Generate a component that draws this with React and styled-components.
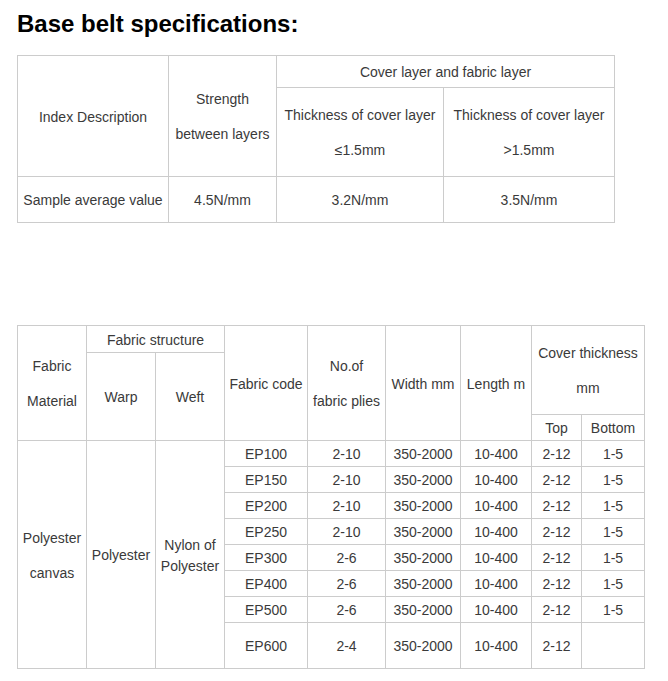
import React from "react"
import styled, { createGlobalStyle } from "styled-components"

const GlobalStyle = createGlobalStyle`
  body {
    margin: 0;
    background: #fff;
    font-family: "Liberation Sans", Arial, sans-serif;
  }
`

const rows = [
  ["EP100", "2-10", "1-5"],
  ["EP150", "2-10", "1-5"],
  ["EP200", "2-10", "1-5"],
  ["EP250", "2-10", "1-5"],
  ["EP300", "2-6", "1-5"],
  ["EP400", "2-6", "1-5"],
  ["EP500", "2-6", "1-5"],
  ["EP600", "2-4", ""],
]

function App() {
  return (
    <Page>
      <GlobalStyle />
      <Heading>Base belt specifications:</Heading>

      <SpecTable $width={598}>
        <colgroup>
          <col style={{ width: 151 }} />
          <col style={{ width: 108 }} />
          <col style={{ width: 167 }} />
          <col style={{ width: 171 }} />
        </colgroup>
        <tbody>
          <Row $h={32}>
            <Cell rowSpan={2}>Index Description</Cell>
            <Cell rowSpan={2}>
              <Lines>
                <span>Strength</span>
                <span>between layers</span>
              </Lines>
            </Cell>
            <Cell colSpan={2}>Cover layer and fabric layer</Cell>
          </Row>
          <Row $h={89}>
            <Cell>
              <Lines>
                <span>Thickness of cover layer</span>
                <span>≤1.5mm</span>
              </Lines>
            </Cell>
            <Cell>
              <Lines>
                <span>Thickness of cover layer</span>
                <span>&gt;1.5mm</span>
              </Lines>
            </Cell>
          </Row>
          <Row $h={46}>
            <Cell>Sample average value</Cell>
            <Cell>4.5N/mm</Cell>
            <Cell>3.2N/mm</Cell>
            <Cell>3.5N/mm</Cell>
          </Row>
        </tbody>
      </SpecTable>

      <SecondTable $width={628}>
        <colgroup>
          <col style={{ width: 69 }} />
          <col style={{ width: 69 }} />
          <col style={{ width: 69 }} />
          <col style={{ width: 83 }} />
          <col style={{ width: 78 }} />
          <col style={{ width: 75 }} />
          <col style={{ width: 71 }} />
          <col style={{ width: 50 }} />
          <col style={{ width: 63 }} />
        </colgroup>
        <tbody>
          <Row $h={27}>
            <Cell rowSpan={3}>
              <Lines>
                <span>Fabric</span>
                <span>Material</span>
              </Lines>
            </Cell>
            <Cell colSpan={2}>Fabric structure</Cell>
            <Cell rowSpan={3}>Fabric code</Cell>
            <Cell rowSpan={3}>
              <Lines>
                <span>No.of</span>
                <span>fabric plies</span>
              </Lines>
            </Cell>
            <Cell rowSpan={3}>Width mm</Cell>
            <Cell rowSpan={3}>Length m</Cell>
            <Cell colSpan={2} rowSpan={2}>
              <Lines>
                <span>Cover thickness</span>
                <span>mm</span>
              </Lines>
            </Cell>
          </Row>
          <Row $h={62}>
            <Cell rowSpan={2}>Warp</Cell>
            <Cell rowSpan={2}>Weft</Cell>
          </Row>
          <Row $h={26}>
            <Cell>Top</Cell>
            <Cell>Bottom</Cell>
          </Row>
          {rows.map(([code, plies, bottom], i) => (
            <Row key={code} $h={i === rows.length - 1 ? 46 : 26}>
              {i === 0 && (
                <>
                  <Cell rowSpan={rows.length}>
                    <Lines>
                      <span>Polyester</span>
                      <span>canvas</span>
                    </Lines>
                  </Cell>
                  <Cell rowSpan={rows.length}>Polyester</Cell>
                  <Cell rowSpan={rows.length}>Nylon of Polyester</Cell>
                </>
              )}
              <Cell>{code}</Cell>
              <Cell>{plies}</Cell>
              <Cell>350-2000</Cell>
              <Cell>10-400</Cell>
              <Cell>2-12</Cell>
              <Cell>{bottom}</Cell>
            </Row>
          ))}
        </tbody>
      </SecondTable>
    </Page>
  )
}

export default App

const Page = styled.div`
  padding: 10px 0 0 17px;
  color: #3a3a3a;
`
const Heading = styled.h1`
  margin: 0;
  font-size: 24px;
  line-height: 28px;
  font-weight: bold;
  color: #000;
  font-family: "Liberation Sans", Arial, sans-serif;
`
const SpecTable = styled.table`
  margin-top: 17px;
  width: ${(p) => p.$width}px;
  border-collapse: collapse;
  table-layout: fixed;
  font-size: 14px;
  line-height: 21px;
`
const SecondTable = styled(SpecTable)`
  margin-top: 102px;
`
const Row = styled.tr`
  height: ${(p) => p.$h}px;
`
const Cell = styled.td`
  border: 1px solid #ccc;
  padding: 2px 2px 0;
  text-align: center;
  vertical-align: middle;
`
const Lines = styled.div`
  display: flex;
  flex-direction: column;
  align-items: center;
  gap: 14px;
`
